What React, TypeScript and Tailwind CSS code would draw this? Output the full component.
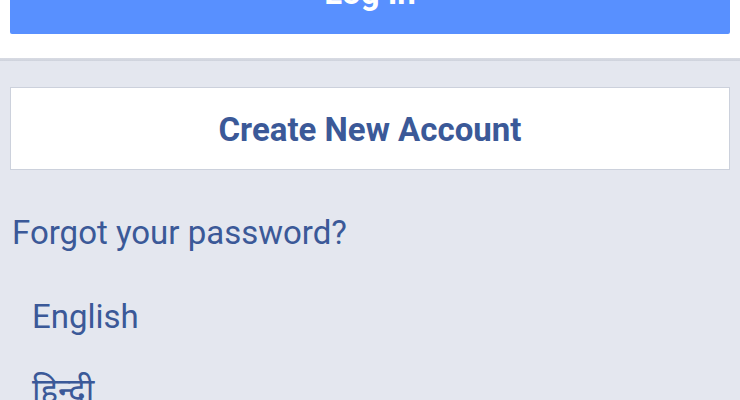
export default function App() {
  return (
    <div className="w-[740px] h-[400px] overflow-hidden bg-[#e4e7ef] font-['Roboto','Noto_Sans',sans-serif]">
      <div className="bg-white px-[10px] pb-[24px] -mt-[49px]">
        <button className="w-full h-[83px] rounded-[2px] bg-[#5890ff] text-white text-[33px] font-bold">
          Log In
        </button>
      </div>
      <div className="h-[3px] bg-gradient-to-b from-[#d8dbe3] to-[#cfd3dd]" />
      <div className="px-[10px] pt-[26px]">
        <button className="w-full h-[83px] pt-[3px] bg-white border border-[#ccd1dc] text-[#3b5998] text-[33px] font-bold">
          Create New Account
        </button>
      </div>
      <div className="px-[12px] pt-[45px]">
        <a className="text-[33px] text-[#3b5998] leading-[36px]">Forgot your password?</a>
      </div>
      <div className="flex flex-col gap-[38px] px-[32px] pt-[48px] text-[33px] text-[#3b5998] leading-[36px]">
        <span>English</span>
        <span>हिन्दी</span>
      </div>
    </div>
  )
}
